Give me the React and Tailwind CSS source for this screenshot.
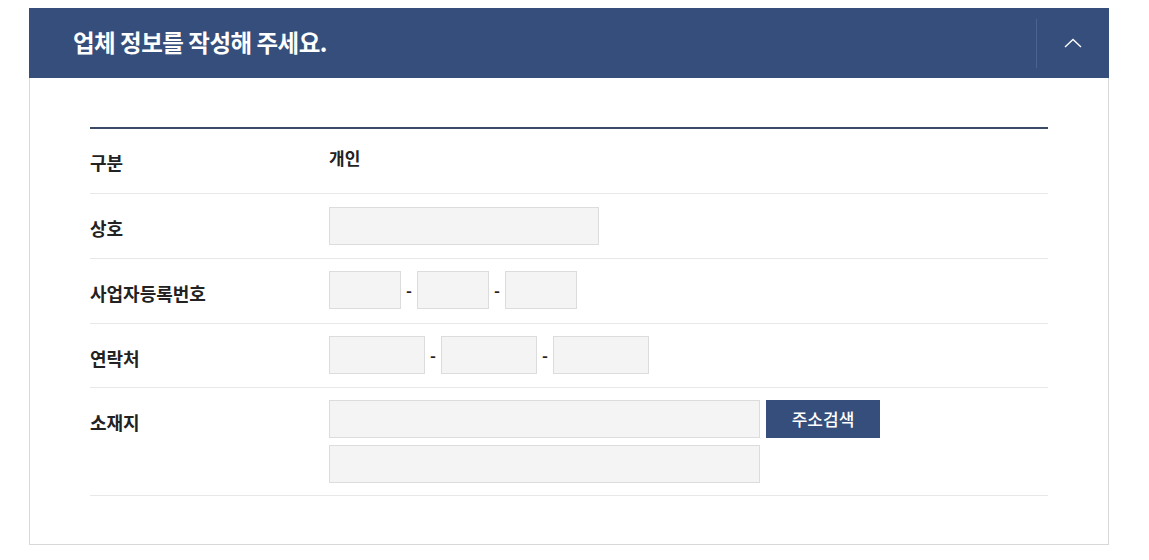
import React from 'react';

const font = { fontFamily: '"Noto Sans CJK KR", "Noto Sans", sans-serif' };

function Field({ w }) {
  return <input type="text" className={`block ${w} h-[38px] bg-[#f4f4f4] border border-[#dcdcdc] outline-none`} />;
}

function Dash() {
  return <span className="w-4 text-center text-[16px] font-semibold text-[#222] leading-none">-</span>;
}

function Row({ label, children, pad }) {
  return (
    <div className="flex border-b border-[#e8e8e8]">
      <div className="w-[239px] shrink-0 pt-[21px] text-[18px] font-semibold text-[#222] leading-[26px]">{label}</div>
      <div className={`flex-1 ${pad}`}>{children}</div>
    </div>
  );
}

export default function App() {
  return (
    <div className="w-[1149px] h-[560px] bg-white pt-2" style={font}>
      <div className="ml-[29px] w-[1080px]">
        {/* ── Header ── */}
        <div className="h-[70px] bg-[#354e7b] flex items-center">
          <h2 className="flex-1 pl-[44px] text-[23.5px] font-semibold text-white tracking-[-0.5px] leading-none">
            업체 정보를 작성해 주세요.
          </h2>
          <div className="w-px h-[49px] bg-[#4c6391]" />
          <button className="w-[72px] h-full flex items-center justify-center">
            <svg width="18" height="10" viewBox="0 0 18 10" fill="none">
              <path d="M1 9 L9 1.5 L17 9" stroke="white" strokeWidth="1.4" />
            </svg>
          </button>
        </div>

        {/* ── Body ── */}
        <div className="border-x border-b border-[#d8d8d8] pt-[49px] pb-[48px] px-[60px]">
          <div className="border-t-2 border-[#3b4a66]">
            <div className="flex h-[65px] border-b border-[#e8e8e8]">
              <div className="w-[239px] shrink-0 pt-[20px] text-[18px] font-semibold text-[#222] leading-[26px]">구분</div>
              <div className="pt-[16px] text-[17px] font-semibold text-[#222] leading-[26px]">개인</div>
            </div>

            <Row label="상호" pad="pt-[13px] pb-[13px]">
              <Field w="w-[270px]" />
            </Row>

            <Row label="사업자등록번호" pad="pt-[12px] pb-[14px]">
              <div className="flex items-center">
                <Field w="w-[72px]" />
                <Dash />
                <Field w="w-[72px]" />
                <Dash />
                <Field w="w-[72px]" />
              </div>
            </Row>

            <Row label="연락처" pad="pt-[12px] pb-[13px]">
              <div className="flex items-center">
                <Field w="w-[96px]" />
                <Dash />
                <Field w="w-[96px]" />
                <Dash />
                <Field w="w-[96px]" />
              </div>
            </Row>

            <Row label="소재지" pad="pt-[12px] pb-[12px]">
              <div className="flex flex-col gap-[7px]">
                <div className="flex gap-[6px]">
                  <Field w="w-[431px]" />
                  <button className="w-[114px] h-[38px] bg-[#354e7b] text-white text-[17px] font-medium">주소검색</button>
                </div>
                <Field w="w-[431px]" />
              </div>
            </Row>
          </div>
        </div>
      </div>
    </div>
  );
}
